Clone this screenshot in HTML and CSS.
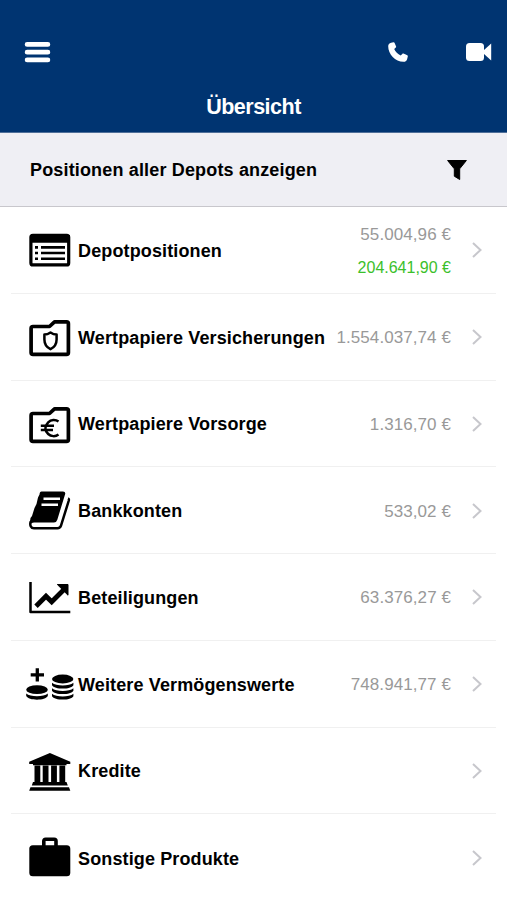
FILE: index.html
```html
<!DOCTYPE html>
<html lang="de">
<head>
    <meta charset="UTF-8">
    <meta name="viewport" content="width=device-width, initial-scale=1.0">
    <title>Übersicht</title>
    <link rel="stylesheet" href="styles.css">
</head>
<body>

<header class="header">
    <div class="toolbar">
        <svg class="menu" viewBox="0 0 26 22"><path d="M3 3.2h20M3 10.7h20M3 18.2h20" stroke="#fff" stroke-width="4.6" stroke-linecap="round"/></svg>
        <svg class="phone" viewBox="0 0 20 20"><path d="M3.1.7 5.4.2c.5-.1.9.1 1.1.6l1.6 3.7c.2.4.1.8-.3 1.1L6.2 7.1c1.2 2.7 3.6 5.2 6.5 6.5l1.6-1.7c.3-.4.8-.5 1.2-.3l3.8 1.7c.4.2.6.6.5 1.1l-.7 2.8c-.3 1.400-1.500 2.600-3.600 2.600C7.200 19.800.2 12.400.2 4.300.2 2.300 1.300 1.100 3.100.7z" fill="#fff"/></svg>
        <svg class="video" viewBox="0 0 26 18"><rect width="18" height="18" rx="3.5" fill="#fff"/><path d="M18 7 25.200.6v16.800L18 11z" fill="#fff"/></svg>
    </div>
    <h1>Übersicht</h1>
</header>

<div class="filter-bar">
    <span>Positionen aller Depots anzeigen</span>
    <svg class="filter" viewBox="0 0 20 20"><path d="M.6.5h18.8L12.700 8.800V19.500L7.300 16.200V8.800z" fill="#000" stroke="#000" stroke-linejoin="round"/></svg>
</div>

<main class="list">
    <div class="row">
        <svg class="icon" viewBox="0 0 48 48">
            <rect x="4.9" y="9.3" width="37.8" height="29.6" rx="2" fill="none" stroke="#000" stroke-width="3.2"/>
            <path d="M4 9h40v7.800H4z"/>
            <path d="M9 21.400h3M9 27h3M9 32.700h3M15 21.400h24M15 27h24M15 32.700h24" stroke="#000" stroke-width="2.6"/>
        </svg>
        <span class="name">Depotpositionen</span>
        <span class="value">55.004,96 €<span class="gain">204.641,90 €</span></span>
        <svg class="chevron" viewBox="0 0 10 16"><path d="M1 1l7.500 7L1 15"/></svg>
    </div>
    <div class="row">
        <svg class="icon" viewBox="0 0 48 48">
            <path class="line" d="M7 13.500H23.500L28.500 8.900H40.500Q42.400 8.900 42.400 10.800V39.500Q42.400 41.400 40.500 41.400H7Q5.100 41.400 5.100 39.500V15.400Q5.100 13.500 7 13.500z"/>
            <path class="line thin" d="M24.500 19.400Q27.500 21.500 30.600 21.500V26.500C30.600 31 28.200 34.400 24.500 36.200C20.800 34.400 18.400 31 18.400 26.500V21.500Q21.500 21.500 24.500 19.400z"/>
        </svg>
        <span class="name">Wertpapiere Versicherungen</span>
        <span class="value">1.554.037,74 €</span>
        <svg class="chevron" viewBox="0 0 10 16"><path d="M1 1l7.500 7L1 15"/></svg>
    </div>
    <div class="row">
        <svg class="icon" viewBox="0 0 48 48">
            <path class="line" d="M7 13.500H23.500L28.500 8.900H40.500Q42.400 8.900 42.400 10.800V39.500Q42.400 41.400 40.500 41.400H7Q5.100 41.400 5.100 39.500V15.400Q5.100 13.500 7 13.500z"/>
            <path class="line thin" d="M32.500 21.500C29.500 19.200 25 19.400 22.200 22.300C18.500 26 18.500 30.500 22.200 34C25 36.700 29.500 36.800 32.500 34.500M14.800 25.800H28M14.800 30H27"/>
        </svg>
        <span class="name">Wertpapiere Vorsorge</span>
        <span class="value">1.316,70 €</span>
        <svg class="chevron" viewBox="0 0 10 16"><path d="M1 1l7.500 7L1 15"/></svg>
    </div>
    <div class="row">
        <svg class="icon" viewBox="0 0 48 48">
            <path d="M15.500 4.500H37Q39.900 4.500 39.100 7.300L31.300 32.700Q30.500 35.500 28 35.500H8Q5.500 35.500 4.500 37L3.700 34.500Q4.300 33.500 4.500 31L6 29L8.500 21L10.500 17L12 10.500L13.500 7.500Q13.700 4.500 15.500 4.500z"/>
            <path d="M4.700 34.500C3.500 38.500 5 41.200 8 41.200H31.500Q34.200 41.200 35 38.600L42.800 13.500Q43.200 12 42 11.500" fill="none" stroke="#000" stroke-width="2.5"/>
            <path d="M17.500 11.800H34M15.500 17.700H32" stroke="#fff" stroke-width="2.5"/>
        </svg>
        <span class="name">Bankkonten</span>
        <span class="value">533,02 €</span>
        <svg class="chevron" viewBox="0 0 10 16"><path d="M1 1l7.500 7L1 15"/></svg>
    </div>
    <div class="row">
        <svg class="icon" viewBox="0 0 48 48">
            <path class="line thin" d="M4.500 9V39H44.300"/>
            <path d="M10 33.200L20 23.200L25.700 28.800L38 16.500" fill="none" stroke="#000" stroke-width="4.8"/>
            <path d="M31.300 11.500H42V22.200z" stroke="#000" stroke-linejoin="round"/>
        </svg>
        <span class="name">Beteiligungen</span>
        <span class="value">63.376,27 €</span>
        <svg class="chevron" viewBox="0 0 10 16"><path d="M1 1l7.500 7L1 15"/></svg>
    </div>
    <div class="row">
        <svg class="icon" viewBox="0 0 48 48">
            <path d="M11.300 8.200V21.400M4.700 14.800H18" stroke="#000" stroke-width="3.3"/>
            <ellipse cx="11" cy="29.700" rx="10.800" ry="4.400"/>
            <path d="M.2 33.500C4 37 18 37 21.800 33.500V36C19.500 40.900 2.500 40.900 .2 36z"/>
            <ellipse cx="36.700" cy="19" rx="10.700" ry="4.400"/>
            <path d="M26 22.800C30 26.500 43.500 26.500 47.400 22.800V25.200C45 29.700 28.500 29.700 26 25.200z"/>
            <path d="M26 28.300C30 32 43.500 32 47.400 28.300V30.700C45 35.200 28.500 35.200 26 30.700z"/>
            <path d="M26 33.800C30 37.500 43.500 37.500 47.400 33.800V36.200C45 40.700 28.500 40.700 26 36.200z"/>
        </svg>
        <span class="name">Weitere Vermögenswerte</span>
        <span class="value">748.941,77 €</span>
        <svg class="chevron" viewBox="0 0 10 16"><path d="M1 1l7.500 7L1 15"/></svg>
    </div>
    <div class="row">
        <svg class="icon" viewBox="0 0 48 48">
            <path d="M23.900 6L44.300 14.700V17H40.500V18.300H7V17H3.200V14.700z"/>
            <path d="M8.500 18.500H14.300V35.500H8.500zM16.700 18.500h5.800v17h-5.800zM25.100 18.500h5.800v17h-5.800zM33.400 18.500h5.800v17h-5.800zM7 35H40.500L41.800 38.500H5.800zM4.500 40.200H43L44.300 43.800H3.200z"/>
        </svg>
        <span class="name">Kredite</span>
        <svg class="chevron" viewBox="0 0 10 16"><path d="M1 1l7.500 7L1 15"/></svg>
    </div>
    <div class="row">
        <svg class="icon" viewBox="0 0 48 48">
            <rect x="3.3" y="11.3" width="41" height="30.9" rx="3.5"/>
            <path d="M17.800 13V7Q17.800 5.200 19.600 5.200H28.200Q30 5.200 30 7V13" fill="none" stroke="#000" stroke-width="3.6"/>
        </svg>
        <span class="name">Sonstige Produkte</span>
        <svg class="chevron" viewBox="0 0 10 16"><path d="M1 1l7.500 7L1 15"/></svg>
    </div>
</main>

</body>
</html>
```
FILE: styles.css
```css
* { box-sizing: border-box; }
body { font-family: "Liberation Sans", Arial, sans-serif; background: #fff; margin: 0; color: #000; height: 900px; overflow: hidden; }
svg { display: block; flex: none; }

.header { background: #003471; color: #fff; height: 133px; padding-top: 41px; border-bottom: 1px solid #4f6f99; }
.toolbar { display: flex; align-items: center; height: 22px; padding: 0 15px 0 24px; }
.menu { width: 27px; height: 23px; }
.phone { width: 20px; height: 20px; margin-left: auto; }
.video { width: 26px; height: 18px; margin-left: 58px; }
h1 { margin: 32px 0 0; font-size: 21.5px; line-height: 24px; text-align: center; letter-spacing: -0.5px; }

.filter-bar { display: flex; align-items: center; justify-content: space-between; height: 74px; padding: 1px 40px 0 30px; background: #efeff4; border-bottom: 1px solid #c8c7cc; font-size: 18px; font-weight: bold; letter-spacing: 0.16px; }
.filter { width: 20px; height: 20px; }

.row { display: flex; align-items: center; height: 86.75px; margin: 0 11px; padding: 1px 14px 0 15px; border-bottom: 1.5px solid #f0f0f0; }
.row:last-child { border-bottom: 0; }
.icon { width: 48px; height: 48px; }
.line { fill: none; stroke: #000; stroke-width: 3.7; stroke-linejoin: round; }
.thin { stroke-width: 2.5; }
.name { margin-left: 4px; padding-top: 2px; font-size: 18px; font-weight: bold; letter-spacing: 0.13px; white-space: nowrap; }
.value { margin-left: auto; margin-right: 21px; padding-top: 1px; color: #999; font-size: 17px; line-height: 33px; letter-spacing: 0.08px; text-align: right; white-space: nowrap; }
.gain { display: block; color: #3bc02b; font-size: 16px; letter-spacing: 0; }
.chevron { width: 10px; height: 16px; margin-left: auto; fill: none; stroke: #c7c7cc; stroke-width: 2; }
.value + .chevron { margin-left: 0; }
```
